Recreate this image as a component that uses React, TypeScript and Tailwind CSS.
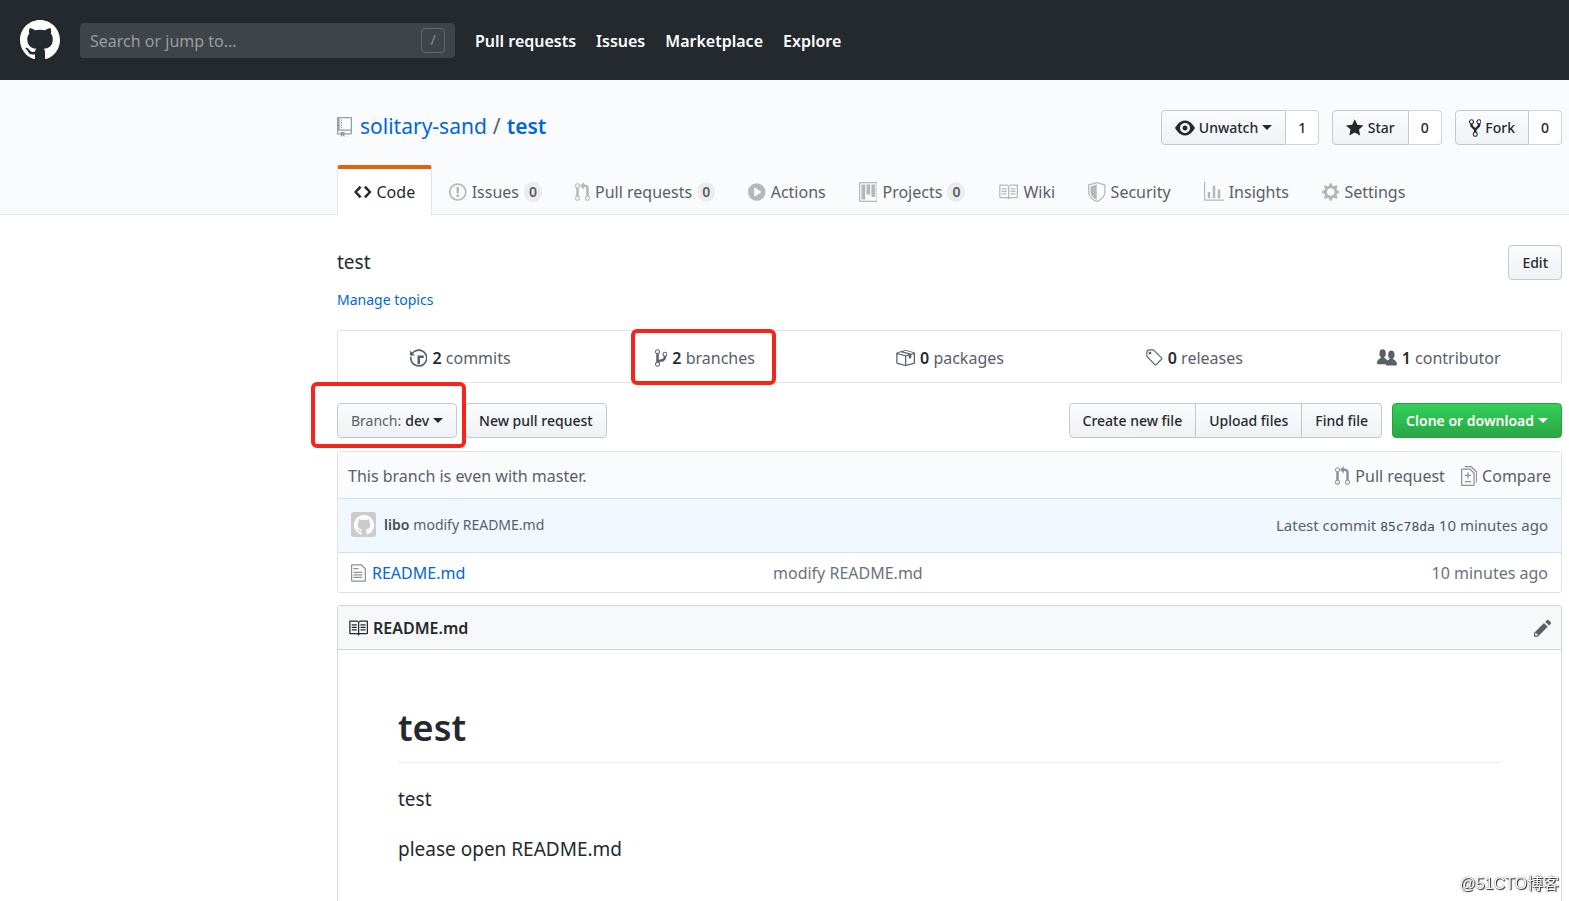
import type { ReactNode } from "react";

type IconShape = { w: number; d: string };

const icons = {
  mark: {
    w: 16,
    d: "M8 0C3.58 0 0 3.58 0 8c0 3.54 2.29 6.53 5.47 7.59.4.07.55-.17.55-.38 0-.19-.01-.82-.01-1.49-2.01.37-2.53-.49-2.69-.94-.09-.23-.48-.94-.82-1.13-.28-.15-.68-.52-.01-.53.63-.01 1.08.58 1.23.82.72 1.21 1.87.87 2.33.66.07-.52.28-.87.51-1.07-1.78-.2-3.64-.89-3.64-3.95 0-.87.31-1.59.82-2.15-.08-.2-.36-1.02.08-2.12 0 0 .67-.21 2.2.82.64-.18 1.32-.27 2-.27.68 0 1.36.09 2 .27 1.53-1.04 2.2-.82 2.2-.82.44 1.1.16 1.92.08 2.12.51.56.82 1.27.82 2.15 0 3.07-1.87 3.75-3.65 3.95.29.25.54.73.54 1.48 0 1.07-.01 1.93-.01 2.2 0 .21.15.46.55.38A8.013 8.013 0 0 0 16 8c0-4.42-3.58-8-8-8z",
  },
  repo: {
    w: 12,
    d: "M4 9H3V8h1v1zm0-3H3v1h1V6zm0-2H3v1h1V4zm0-2H3v1h1V2zm8-1v12c0 .55-.45 1-1 1H6v2l-1.5-1.5L3 16v-2H1c-.55 0-1-.45-1-1V1c0-.55.45-1 1-1h10c.55 0 1 .45 1 1zm-1 10H1v2h2v-1h3v1h5v-2zm0-10H2v9h9V1z",
  },
  code: {
    w: 14,
    d: "M9.5 3L8 4.5 11.5 8 8 11.5 9.5 13 14 8 9.5 3zm-5 0L0 8l4.5 5L6 11.5 2.5 8 6 4.5 4.5 3z",
  },
  issue: {
    w: 14,
    d: "M7 2.3c3.14 0 5.7 2.56 5.7 5.7s-2.56 5.7-5.7 5.7A5.71 5.71 0 0 1 1.3 8c0-3.14 2.56-5.7 5.7-5.7zM7 1C3.14 1 0 4.14 0 8s3.14 7 7 7 7-3.14 7-7-3.14-7-7-7zm1 3H6v5h2V4zm0 6H6v2h2v-2z",
  },
  pull: {
    w: 12,
    d: "M11 11.28V5c-.03-.78-.34-1.47-.94-2.06C9.46 2.35 8.78 2.03 8 2H7V0L4 3l3 3V4h1c.27.02.48.11.69.31.21.2.3.42.31.69v6.28A1.993 1.993 0 0 0 10 15a1.993 1.993 0 0 0 1-3.72zm-1 2.92c-.66 0-1.2-.55-1.2-1.2 0-.65.55-1.2 1.2-1.2.65 0 1.2.55 1.2 1.2 0 .65-.55 1.2-1.2 1.2zM4 3c0-1.11-.89-2-2-2a1.993 1.993 0 0 0-1 3.72v6.56A1.993 1.993 0 0 0 2 15a1.993 1.993 0 0 0 1-3.72V4.72c.59-.34 1-.98 1-1.72zm-.8 10c0 .66-.55 1.2-1.2 1.2-.65 0-1.2-.55-1.2-1.2 0-.65.55-1.2 1.2-1.2.65 0 1.2.55 1.2 1.2zM2 4.2C1.34 4.2.8 3.65.8 3c0-.65.55-1.2 1.2-1.2.65 0 1.2.55 1.2 1.2 0 .65-.55 1.2-1.2 1.2z",
  },
  play: {
    w: 14,
    d: "M14 8A7 7 0 1 1 0 8a7 7 0 0 1 14 0zm-8.223 3.482l4.599-3.066a.5.5 0 0 0 0-.832L5.777 4.518A.5.5 0 0 0 5 4.934v6.132a.5.5 0 0 0 .777.416z",
  },
  project: {
    w: 15,
    d: "M10 12h3V2h-3v10zm-4-2h3V2H6v8zm-4 4h3V2H2v12zm-1 1h13V1H1v14zM14 0H1a1 1 0 0 0-1 1v14a1 1 0 0 0 1 1h13a1 1 0 0 0 1-1V1a1 1 0 0 0-1-1z",
  },
  book: {
    w: 16,
    d: "M3 5h4v1H3V5zm0 3h4V7H3v1zm0 2h4V9H3v1zm11-5h-4v1h4V5zm0 2h-4v1h4V7zm0 2h-4v1h4V9zm2-6v9c0 .55-.45 1-1 1H9.5l-1 1-1-1H2c-.55 0-1-.45-1-1V3c0-.55.45-1 1-1h5.5l1 1 1-1H15c.55 0 1 .45 1 1zm-8 .5L7.5 3H2v9h6V3.5zm7-.5H9.5l-.5.5V12h6V3z",
  },
  shield: {
    w: 14,
    d: "M0 2l7-2 7 2v6.02C14 12.69 8.69 16 7 16c-1.69 0-7-3.31-7-7.98V2zm1 .75L7 1l6 1.75v5.268C13 12.104 8.449 15 7 15c-1.449 0-6-2.896-6-6.982V2.75zm1 .75L7 2v12c-1.207 0-5-2.482-5-5.985V3.5z",
  },
  graph: {
    w: 16,
    d: "M16 14v1H0V0h1v14h15zM5 13H3V8h2v5zm4 0H7V3h2v10zm4 0h-2V6h2v7z",
  },
  gear: {
    w: 14,
    d: "M14 8.77v-1.6l-1.94-.64-.45-1.09.88-1.84-1.13-1.13-1.81.91-1.09-.45-.69-1.92h-1.6l-.63 1.94-1.11.45-1.84-.88-1.13 1.13.91 1.81-.45 1.09L0 7.23v1.59l1.94.64.45 1.09-.88 1.84 1.13 1.13 1.81-.91 1.09.45.69 1.92h1.59l.63-1.94 1.11-.45 1.84.88 1.13-1.13-.92-1.81.47-1.09L14 8.75v.02zM7 11c-1.66 0-3-1.34-3-3s1.34-3 3-3 3 1.34 3 3-1.34 3-3 3z",
  },
  eye: {
    w: 16,
    d: "M8.06 2C3 2 0 8 0 8s3 6 8.06 6C13 14 16 8 16 8s-3-6-7.94-6zM8 12c-2.2 0-4-1.78-4-4 0-2.2 1.8-4 4-4 2.22 0 4 1.8 4 4 0 2.22-1.78 4-4 4zm2-4c0 1.11-.89 2-2 2-1.11 0-2-.89-2-2 0-1.11.89-2 2-2 1.11 0 2 .89 2 2z",
  },
  star: {
    w: 14,
    d: "M14 6l-4.9-.64L7 1 4.9 5.36 0 6l3.6 3.26L2.67 14 7 11.67 11.33 14l-.93-4.74L14 6z",
  },
  fork: {
    w: 10,
    d: "M8 1a1.993 1.993 0 0 0-1 3.72V6L5 8 3 6V4.72A1.993 1.993 0 0 0 2 1a1.993 1.993 0 0 0-1 3.72V6.5l3 3v1.78A1.993 1.993 0 0 0 5 15a1.993 1.993 0 0 0 1-3.72V9.5l3-3V4.72A1.993 1.993 0 0 0 8 1zM2 4.2C1.34 4.2.8 3.65.8 3c0-.65.55-1.2 1.2-1.2.65 0 1.2.55 1.2 1.2 0 .65-.55 1.2-1.2 1.2zm3 10c-.66 0-1.2-.55-1.2-1.2 0-.65.55-1.2 1.2-1.2.65 0 1.2.55 1.2 1.2 0 .65-.55 1.2-1.2 1.2zm3-10c-.66 0-1.2-.55-1.2-1.2 0-.65.55-1.2 1.2-1.2.65 0 1.2.55 1.2 1.2 0 .65-.55 1.2-1.2 1.2z",
  },
  history: {
    w: 14,
    d: "M8 13H6V6h5v2H8v5zM7 1C4.81 1 2.87 2.02 1.59 3.59L0 2v4h4L2.5 4.5C3.55 3.17 5.17 2.3 7 2.3c3.14 0 5.7 2.56 5.7 5.7s-2.56 5.7-5.7 5.7A5.71 5.71 0 0 1 1.3 8c0-.34.03-.67.09-1H.08C.03 7.33 0 7.66 0 8c0 3.86 3.14 7 7 7s7-3.14 7-7-3.14-7-7-7z",
  },
  branch: {
    w: 10,
    d: "M10 5c0-1.11-.89-2-2-2a1.993 1.993 0 0 0-1 3.72v.3c-.02.52-.23.98-.63 1.38-.4.4-.86.61-1.38.63-.83.02-1.48.16-2 .45V4.72a1.993 1.993 0 0 0-1-3.72C.88 1 0 1.89 0 3a2 2 0 0 0 1 1.72v6.56c-.59.35-1 .99-1 1.72 0 1.11.89 2 2 2 1.11 0 2-.89 2-2 0-.53-.2-1-.53-1.36.09-.06.48-.41.59-.47.25-.11.56-.17.94-.17 1.05-.05 1.95-.45 2.75-1.25S8.95 7.77 9 6.73h-.02C9.59 6.37 10 5.73 10 5zM2 1.8c.66 0 1.2.55 1.2 1.2 0 .65-.55 1.2-1.2 1.2C1.35 4.2.8 3.65.8 3c0-.65.55-1.2 1.2-1.2zm0 12.41c-.66 0-1.2-.55-1.2-1.2 0-.65.55-1.2 1.2-1.2.65 0 1.2.55 1.2 1.2 0 .65-.55 1.2-1.2 1.2zm6-8c-.66 0-1.2-.55-1.2-1.2 0-.65.55-1.2 1.2-1.2.65 0 1.2.55 1.2 1.2 0 .65-.55 1.2-1.2 1.2z",
  },
  pkg: {
    w: 16,
    d: "M1 4.27v7.47c0 .45.3.84.75.97l6.5 1.73c.16.05.34.05.5 0l6.5-1.73c.45-.13.75-.52.75-.97V4.27c0-.45-.3-.84-.75-.97l-6.5-1.74a1.4 1.4 0 0 0-.5 0L1.75 3.3c-.45.13-.75.52-.75.97zm7 9.09l-6-1.59V5l6 1.61v6.75zM2 4l2.5-.67L11 5.06l-2.5.67L2 4zm13 7.77l-6 1.59V6.61l2-.55V8.5l2-.53V5.53L15 5v6.77zm-2-7.24L6.5 2.8l2-.53L15 4l-2 .53z",
  },
  tag: {
    w: 14,
    d: "M7.685 1.72a2.49 2.49 0 0 0-1.76-.726H3.48A2.5 2.5 0 0 0 .994 3.48v2.456c0 .656.269 1.292.726 1.76l6.024 6.024a.99.99 0 0 0 1.402 0l4.563-4.563a.99.99 0 0 0 0-1.402L7.685 1.72zM2.366 7.048a1.54 1.54 0 0 1-.467-1.123V3.48c0-.874.716-1.58 1.58-1.58h2.456c.418 0 .825.159 1.123.467l6.104 6.094-4.702 4.702-6.094-6.114zm.626-4.066h1.989v1.989H2.982V2.982z",
  },
  people: {
    w: 16,
    d: "M16 12.999c0 .439-.45 1-1 1H7.995c-.539 0-.994-.447-.995-.999H1c-.54 0-1-.561-1-1 0-2.634 3-4 3-4s.229-.409 0-1c-.841-.621-1.058-.59-1-3 .058-2.419 1.367-3 2.5-3s2.442.58 2.5 3c.058 2.41-.159 2.379-1 3-.229.59 0 1 0 1s1.549.711 2.42 2.088C9.196 9.369 10 8.999 10 8.999s.229-.409 0-1c-.841-.62-1.058-.59-1-3 .058-2.419 1.367-3 2.5-3s2.437.581 2.495 3c.059 2.41-.158 2.38-1 3-.229.59 0 1 0 1s3.005 1.366 3.005 4",
  },
  diff: {
    w: 13,
    d: "M6 7h2v1H6v2H5V8H3V7h2V5h1v2zm-3 6h5v-1H3v1zM7.5 2L11 5.5V15c0 .55-.45 1-1 1H1c-.55 0-1-.45-1-1V3c0-.55.45-1 1-1h6.5zM10 6L7 3H1v12h9V6zM8.5 0H3v1h5l4 4v8h1V4.5L8.5 0z",
  },
  file: {
    w: 12,
    d: "M6 5H2V4h4v1zM2 8h7V7H2v1zm0 2h7V9H2v1zm0 2h7v-1H2v1zm10-7.5V14c0 .55-.45 1-1 1H1c-.55 0-1-.45-1-1V2c0-.55.45-1 1-1h7.5L12 4.5zM11 5L8 2H1v12h10V5z",
  },
  pencil: {
    w: 14,
    d: "M0 12v3h3l8-8-3-3-8 8zm3 2H1v-2h1v1h1v1zm10.3-9.3L12 6 9 3l1.3-1.3a.996.996 0 0 1 1.41 0l1.59 1.59c.39.39.39 1.02 0 1.41z",
  },
} satisfies Record<string, IconShape>;

type IconName = keyof typeof icons;

function Icon({ name, className = "" }: { name: IconName; className?: string }) {
  const { w, d } = icons[name];
  return (
    <svg
      viewBox={`0 0 ${w} 16`}
      width={w * 1.25}
      height={20}
      className={`shrink-0 fill-current ${className}`}
      aria-hidden="true"
    >
      <path fillRule="evenodd" d={d} />
    </svg>
  );
}

function Caret() {
  return <span className="ml-1 inline-block border-x-5 border-t-5 border-x-transparent border-t-current" />;
}

const buttonBase =
  "flex h-[35px] items-center border border-[#c6c9cc] bg-linear-to-b from-[#fafbfc] to-[#eff3f6] px-[13px] text-sm font-medium text-[#24292e] whitespace-nowrap";

function CountButton({ icon, label, count, caret }: { icon: IconName; label: string; count: number; caret?: boolean }) {
  return (
    <div className="flex">
      <button type="button" className={`${buttonBase} gap-1 rounded-l`}>
        <Icon name={icon} />
        <span>{label}</span>
        {caret && <span className="-ml-1 flex"><Caret /></span>}
      </button>
      <a
        href="#count"
        className="flex h-[35px] items-center rounded-r border border-l-0 border-[#d1d4d7] bg-white px-3 text-sm font-medium"
      >
        {count}
      </a>
    </div>
  );
}

const tabs: { icon: IconName; label: string; count?: number }[] = [
  { icon: "issue", label: "Issues", count: 0 },
  { icon: "pull", label: "Pull requests", count: 0 },
  { icon: "play", label: "Actions" },
  { icon: "project", label: "Projects", count: 0 },
  { icon: "book", label: "Wiki" },
  { icon: "shield", label: "Security" },
  { icon: "graph", label: "Insights" },
  { icon: "gear", label: "Settings" },
];

function Stat({ icon, value, label, children }: { icon: IconName; value: number; label: string; children?: ReactNode }) {
  return (
    <li className="flex flex-1 items-center justify-center pt-0.5">
      <a href="#stat" className="relative flex items-center gap-[5px] text-base text-[#586069]">
        <Icon name={icon} />
        <span>
          <span className="font-semibold text-[#24292e]">{value}</span> {label}
        </span>
        {children}
      </a>
    </li>
  );
}

export default function App() {
  return (
    <div className="flex min-h-screen flex-col bg-white font-['Noto_Sans','Noto_Sans_CJK_SC',sans-serif] text-base text-[#24292e]">
      <header className="flex h-20 items-center bg-[#24292e] px-5 text-white">
        <a href="#home" aria-label="Homepage" className="mr-5">
          <svg viewBox="0 0 16 16" className="size-10 fill-current" aria-hidden="true">
            <path d={icons.mark.d} />
          </svg>
        </a>
        <label className="mr-5 flex h-[35px] w-[375px] items-center rounded bg-[#3f4448] px-[10px]">
          <input
            type="text"
            aria-label="Search or jump to"
            placeholder="Search or jump to..."
            className="min-w-0 flex-1 bg-transparent pt-0.5 text-base outline-none placeholder:text-[#9a9da0]"
          />
          <span className="flex h-[25px] w-6 items-center justify-center rounded border border-[#64686c] text-sm text-[#8d9194]">
            /
          </span>
        </label>
        <nav className="flex gap-5 pt-0.5 text-base font-semibold">
          <a href="#pulls">Pull requests</a>
          <a href="#issues">Issues</a>
          <a href="#marketplace">Marketplace</a>
          <a href="#explore">Explore</a>
        </nav>
      </header>

      <div className="border-b border-[#e1e4e8] bg-[#fafbfc] pr-[7px] pl-[337px]">
        <div className="flex items-start justify-between pt-[30px]">
          <h1 className="flex h-[33px] items-center text-[21px] text-[#586069]">
            <Icon name="repo" className="mr-2 text-[#959da5]" />
            <a href="#owner" className="text-[#0366d6]">solitary-sand</a>
            <span className="mx-[6px]">/</span>
            <a href="#repo" className="font-semibold text-[#0366d6]">test</a>
          </h1>
          <div className="flex gap-[13px]">
            <CountButton icon="eye" label="Unwatch" count={1} caret />
            <CountButton icon="star" label="Star" count={0} />
            <CountButton icon="fork" label="Fork" count={0} />
          </div>
        </div>
        <nav className="mt-5 -mb-px flex h-[50px] gap-px">
          <a
            href="#code"
            className="flex items-center gap-[5px] rounded-t-[3px] border-x border-t-4 border-x-[#e1e4e8] border-t-[#e36209] bg-white px-4"
          >
            <Icon name="code" />
            Code
          </a>
          {tabs.map(({ icon, label, count }) => (
            <a key={label} href={`#${label}`} className="flex items-center gap-[5px] px-4 pt-1 text-[#586069]">
              <Icon name={icon} className="text-[#b4b8bd]" />
              {label}
              {count !== undefined && (
                <span className="flex h-5 items-center rounded-full bg-[#ebecee] px-[5px] text-sm font-semibold">
                  {count}
                </span>
              )}
            </a>
          ))}
        </nav>
      </div>

      <main className="flex flex-1 flex-col pr-[7px] pl-[337px]">
        <div className="mt-[30px] flex items-start justify-between">
          <p className="text-[19px] leading-[34px]">test</p>
          <button type="button" className={`${buttonBase} rounded`}>Edit</button>
        </div>
        <div className="mt-2 flex h-6 items-center text-sm">
          <a href="#topics" className="text-[#0366d6]">Manage topics</a>
        </div>

        <ul className="mt-[18px] flex h-[53px] rounded-t-[3px] border border-[#e1e4e8]">
          <Stat icon="history" value={2} label="commits" />
          <Stat icon="branch" value={2} label="branches">
            <span className="pointer-events-none absolute -top-[17px] -right-[21px] -bottom-[15px] -left-6 rounded-md border-4 border-[#f5251c]" />
          </Stat>
          <Stat icon="pkg" value={0} label="packages" />
          <Stat icon="tag" value={0} label="releases" />
          <Stat icon="people" value={1} label="contributor" />
        </ul>

        <div className="mt-5 flex">
          <div className="relative z-10">
            <button type="button" className={`${buttonBase} rounded`}>
              <span className="font-normal text-[#586069]">Branch:</span>
              <span className="ml-1">dev</span>
              <Caret />
            </button>
            <span className="pointer-events-none absolute -top-[21px] -right-[9px] -bottom-[10px] -left-[26px] rounded-md border-4 border-[#f5251c]" />
          </div>
          <button type="button" className={`${buttonBase} ml-2 rounded`}>New pull request</button>
          <div className="ml-auto flex">
            <button type="button" className={`${buttonBase} rounded-l`}>Create new file</button>
            <button type="button" className={`${buttonBase} -ml-px`}>Upload files</button>
            <button type="button" className={`${buttonBase} -ml-px rounded-r`}>Find file</button>
          </div>
          <button
            type="button"
            className="ml-[10px] flex h-[35px] items-center rounded border border-[#279f43] bg-linear-to-b from-[#34d058] to-[#28a745] px-[13px] text-sm font-semibold whitespace-nowrap text-white"
          >
            Clone or download
            <Caret />
          </button>
        </div>

        <section className="mt-[13px] rounded-[3px] border border-[#dfe2e5]">
          <div className="flex h-[46px] items-center justify-between bg-[#fafbfc] px-[10px] pt-0.5 text-[#586069]">
            <span>This branch is even with master.</span>
            <div className="flex gap-4">
              <a href="#pull" className="flex items-center gap-[5px]">
                <Icon name="pull" className="text-[#8b929a]" />
                Pull request
              </a>
              <a href="#compare" className="flex items-center gap-[5px]">
                <Icon name="diff" className="text-[#8b929a]" />
                Compare
              </a>
            </div>
          </div>
          <div className="flex h-[55px] items-center justify-between border-y border-[#c8e1ff] bg-[#f1f8ff] px-[13px] text-sm text-[#586069]">
            <div className="flex items-center pb-0.5">
              <span className="mr-2 flex size-[25px] items-center justify-center rounded-[3px] bg-[#cccccc] text-white">
                <svg viewBox="0 0 16 16" className="size-5 fill-current" aria-hidden="true">
                  <path d={icons.mark.d} />
                </svg>
              </span>
              <a href="#author" className="mr-1 font-semibold text-[#444d56]">libo</a>
              <a href="#commit">modify README.md</a>
            </div>
            <span className="text-[15px]">
              Latest commit{" "}
              <a href="#sha" className="font-['DejaVu_Sans_Mono',monospace] text-[13px] text-[#444d56]">85c78da</a>{" "}
              10 minutes ago
            </span>
          </div>
          <table className="w-full table-fixed">
            <tbody>
              <tr className="h-[39px] text-[#6a737d]">
                <td className="w-[435px] pl-[13px]">
                  <span className="flex items-center">
                    <Icon name="file" className="mr-[6px] text-[#8b929a]" />
                    <a href="#readme" className="text-[#0366d6]">README.md</a>
                  </span>
                </td>
                <td><a href="#message">modify README.md</a></td>
                <td className="pr-[13px] text-right">10 minutes ago</td>
              </tr>
            </tbody>
          </table>
        </section>

        <article className="mt-3 flex flex-1 flex-col rounded-t-[3px] border border-b-0 border-[#d1d5da]">
          <div className="flex h-11 items-center border-b border-[#d1d5da] bg-[#f6f8fa] px-[10px]">
            <Icon name="book" className="mr-[5px]" />
            <h3 className="font-semibold">README.md</h3>
            <button type="button" aria-label="Edit this file" className="ml-auto text-[#586069]">
              <Icon name="pencil" />
            </button>
          </div>
          <div className="px-[60px] pt-[54px]">
            <h1 className="mb-[21px] border-b border-[#eaecef] pb-[10px] text-4xl leading-[48px] font-semibold">test</h1>
            <p className="mb-5 text-[19px] leading-[30px]">test</p>
            <p className="text-[19px] leading-[30px]">please open README.md</p>
          </div>
        </article>
      </main>

      <div className="pointer-events-none fixed right-[10px] bottom-[7px] font-['Liberation_Sans','Noto_Sans_CJK_SC',sans-serif] text-base leading-5 text-white [text-shadow:1px_1px_1px_#222,0_0_1px_#333]">
        @51CTO博客
      </div>
    </div>
  );
}
